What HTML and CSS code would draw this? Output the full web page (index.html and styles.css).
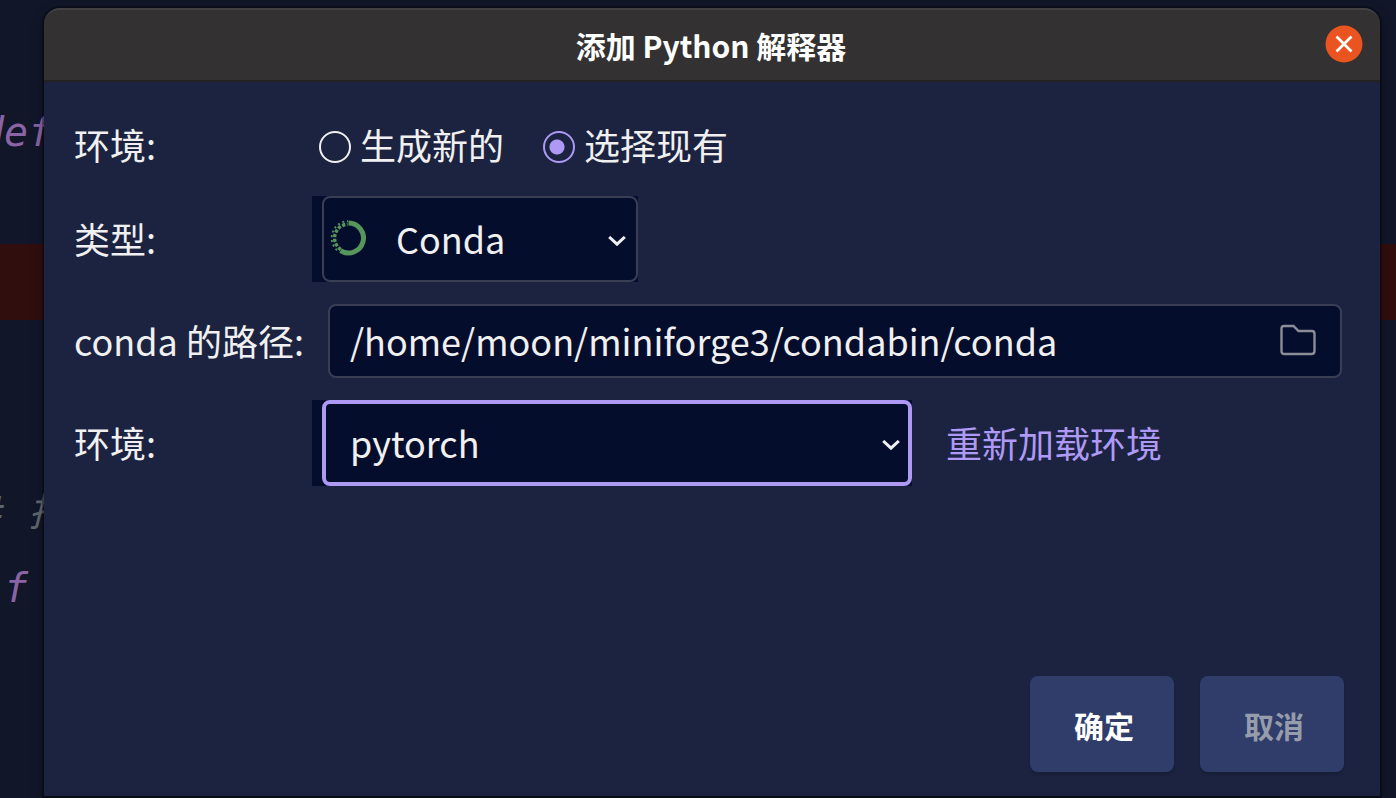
FILE: index.html
```
<!DOCTYPE html>
<html lang="zh-CN">
<head>
<meta charset="utf-8">
<meta name="viewport" content="width=device-width, initial-scale=1">
<title>添加 Python 解释器</title>
<link rel="stylesheet" href="styles.css">
</head>
<body>
<div class="screen">
  <div class="editor" aria-hidden="true">
    <div class="code-line"></div>
    <div class="code-line keyword">def</div>
    <div class="code-line"></div>
    <div class="code-line breakpoint"></div>
    <div class="code-line"></div>
    <div class="code-line"></div>
    <div class="code-line comment"># 择</div>
    <div class="code-line keyword">if</div>
  </div>

  <main class="dialog" role="dialog" aria-labelledby="dialog-title">
    <header class="titlebar">
      <h1 class="title" id="dialog-title">添加 Python 解释器</h1>
      <button class="close" type="button" aria-label="关闭">
        <svg class="close-icon" viewBox="0 0 38 38" aria-hidden="true">
          <circle cx="19" cy="18" r="18.500" fill="#e95420"/>
          <path d="M11.500 10.500 26.500 25.500M26.500 10.500 11.500 25.500" fill="none" stroke="#fff" stroke-width="2.700"/>
        </svg>
      </button>
    </header>

    <form class="content">
      <div class="fields">
        <span class="label mode-label" id="mode-label">环境:</span>
        <div class="radios" role="radiogroup" aria-labelledby="mode-label">
          <label class="option"><input class="radio" type="radio" name="mode" value="new">生成新的</label>
          <label class="option"><input class="radio" type="radio" name="mode" value="existing" checked>选择现有</label>
        </div>

        <label class="label" for="type">类型:</label>
        <div class="control">
          <div class="select-box type-box">
            <select class="select select-type" id="type"><option>Conda</option></select>
            <svg class="conda-icon" viewBox="0 0 36 36" aria-hidden="true">
              <g fill="none" stroke="#56965c">
                <path d="M18.500 3A15 15 0 1 1 10.500 30.700" stroke-width="5"/>
                <path d="M10.800 29.500A13.800 13.800 0 0 1 17.500 4.200" stroke-width="3.400" stroke-dasharray="3.200 1.600"/>
                <path d="M8.500 31.500A16.800 16.800 0 0 1 18 1.200" stroke-width="1.800" stroke-dasharray="2 2.800" stroke-dashoffset="-2"/>
              </g>
            </svg>
            <svg class="chevron" viewBox="0 0 18 10" aria-hidden="true"><path d="M1.200 1 9 8.200 16.800 1" fill="none" stroke="#f0f0f0" stroke-width="3"/></svg>
          </div>
        </div>

        <label class="label" for="path">conda 的路径:</label>
        <div class="path-box">
          <input class="path" id="path" type="text" value="/home/moon/miniforge3/condabin/conda" spellcheck="false">
          <button class="browse" type="button" aria-label="浏览">
            <svg class="folder-icon" viewBox="0 0 36 32" aria-hidden="true">
              <path d="M4 2H13.500L18.500 7H32Q34.500 7 34.500 10V27Q34.500 30 31.500 30H4.500Q1.500 30 1.500 27V5Q1.500 2 4 2Z" fill="none" stroke="#8b8e94" stroke-width="2.400"/>
            </svg>
          </button>
        </div>

        <label class="label" for="env">环境:</label>
        <div class="control">
          <div class="select-box env-box">
            <select class="select select-env" id="env"><option>pytorch</option></select>
            <svg class="chevron" viewBox="0 0 18 10" aria-hidden="true"><path d="M1.200 1 9 8.200 16.800 1" fill="none" stroke="#f0f0f0" stroke-width="3"/></svg>
          </div>
          <a class="reload" href="#reload">重新加载环境</a>
        </div>
      </div>

      <footer class="actions">
        <button class="button primary" type="submit">确定</button>
        <button class="button secondary" type="button">取消</button>
      </footer>
    </form>
  </main>
</div>
</body>
</html>
```
FILE: styles.css
```
*, *::before, *::after {
  box-sizing: border-box;
}

body {
  margin: 0;
  background: #111629;
  color: #f0f0f0;
  font-family: "Noto Sans CJK SC", "Noto Sans", sans-serif;
  font-size: 36px;
  line-height: 52px;
}

button, input, select {
  margin: 0;
  font: inherit;
  color: inherit;
}

.screen {
  display: grid;
  min-height: 100vh;
  overflow: hidden;
}

.editor, .dialog {
  grid-area: 1 / 1;
  min-width: 0;
}

.editor {
  padding-top: 16px;
  font-family: "DejaVu Sans Mono", "Noto Sans CJK SC", monospace;
  font-size: 40px;
  font-style: italic;
}

.code-line {
  height: 76px;
  padding-top: 14px;
  text-indent: -20px;
  white-space: pre;
}

.keyword {
  color: #8a64a4;
}

.comment {
  color: #60666d;
}

.breakpoint {
  background: #300e0d;
}

.dialog {
  display: flex;
  flex-direction: column;
  margin: 8px 16px 2px 44px;
  background: #1c2340;
  border-radius: 16px 16px 0 0;
  box-shadow: 0 0 0 2px rgba(0, 0, 0, .3), 0 4px 14px rgba(0, 0, 0, .3);
}

.titlebar {
  display: grid;
  grid-template-columns: 38px 1fr 38px;
  align-items: center;
  height: 74px;
  padding: 0 17px;
  background: #333131;
  border-top: 2px solid #434241;
  border-bottom: 2px solid #232221;
  border-radius: 16px 16px 0 0;
}

.title {
  grid-column: 2;
  margin: 0;
  padding-right: 2px;
  color: #fff;
  font-size: 30px;
  font-weight: 700;
  line-height: 44px;
  text-align: center;
}

.close {
  width: 38px;
  height: 38px;
  padding: 0;
  background: none;
  border: 0;
  border-radius: 50%;
}

.close-icon {
  display: block;
  overflow: visible;
}

.content {
  display: flex;
  flex: 1;
  flex-direction: column;
  justify-content: space-between;
  padding: 36px 36px 24px 30px;
}

.fields {
  display: grid;
  grid-template-columns: 238px 1fr;
  row-gap: 22px;
  align-items: center;
  padding-right: 2px;
}

.label {
  padding-bottom: 2px;
  white-space: nowrap;
}

.mode-label {
  align-self: start;
}

.radios {
  display: flex;
  gap: 39px;
  padding: 0 0 4px 7px;
}

.option {
  display: flex;
  align-items: center;
  gap: 9px;
}

.radio {
  appearance: none;
  width: 32px;
  height: 32px;
  margin-top: 6px;
  border: 2px solid #f0f0f0;
  border-radius: 50%;
}

.radio:checked {
  border-color: #ae9af5;
  background: radial-gradient(circle at 12px 14px, #ae9af5 7px, transparent 8px);
}

.control {
  display: flex;
  align-items: center;
  gap: 34px;
}

.select-box {
  position: relative;
  padding-left: 10px;
  background: #050d2d;
}

.type-box {
  width: 326px;
}

.env-box {
  width: 600px;
}

.select {
  display: block;
  appearance: none;
  width: 100%;
  height: 86px;
  background: #050d2d;
  border: 2px solid #393e55;
  border-radius: 8px;
  outline: 0;
}

.select-type {
  padding: 0 40px 2px 72px;
}

.select-env {
  padding: 0 40px 2px 24px;
  border: 4px solid #ae9af5;
}

.conda-icon {
  position: absolute;
  top: 24px;
  left: 18px;
  width: 36px;
  height: 36px;
  pointer-events: none;
}

.chevron {
  position: absolute;
  top: 40px;
  right: 12px;
  width: 18px;
  height: 10px;
  pointer-events: none;
}

.path-box {
  display: flex;
  align-items: center;
  height: 74px;
  margin-left: 16px;
  padding: 0 24px 2px 20px;
  background: #050d2d;
  border: 2px solid #393e55;
  border-radius: 8px;
}

.path {
  flex: 1;
  min-width: 0;
  height: 60px;
  padding: 0;
  background: none;
  border: 0;
  outline: 0;
}

.browse {
  width: 36px;
  height: 32px;
  padding: 0;
  background: none;
  border: 0;
}

.folder-icon {
  display: block;
}

.reload {
  padding-bottom: 2px;
  color: #ae9af5;
  text-decoration: none;
}

.actions {
  display: flex;
  justify-content: flex-end;
  gap: 26px;
}

.button {
  width: 144px;
  height: 96px;
  padding: 2px 0 0 4px;
  background: #303d6a;
  border: 0;
  border-radius: 8px;
  box-shadow: 0 3px 2px #191f38;
  font-size: 30px;
  font-weight: 700;
}

.primary {
  color: #fff;
}

.secondary {
  color: #959cab;
}
```
